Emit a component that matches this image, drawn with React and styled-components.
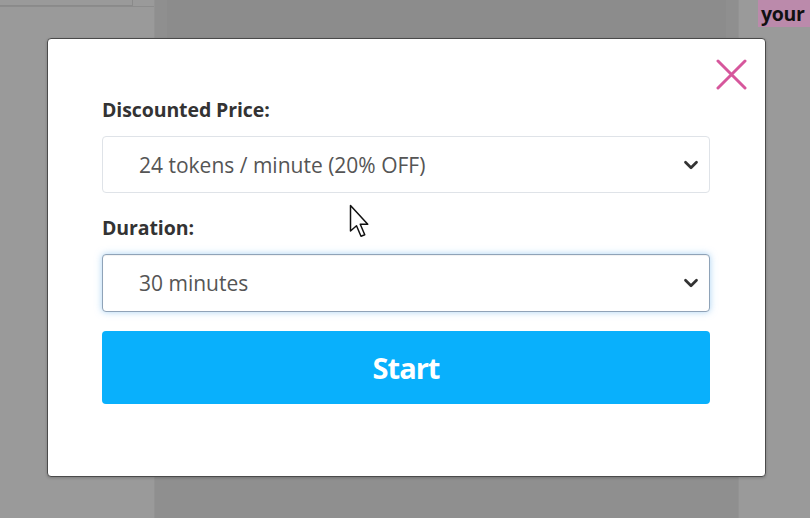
import React from "react";
import styled, { createGlobalStyle } from "styled-components";
import { ChevronDown } from "lucide-react";

const GlobalStyle = createGlobalStyle`
  html, body {
    margin: 0;
    padding: 0;
    background: #8f8f8f;
    font-family: "Open Sans", "Liberation Sans", sans-serif;
  }
  #root {
    width: 810px;
    height: 518px;
    overflow: hidden;
  }
`;

const Page = styled.div`
  position: relative;
  display: grid;
  grid-template-columns: 155px 1fr 72px;
  width: 810px;
  height: 518px;
  background: #8f8f8f;
`;

const SideColumn = styled.div`
  display: flex;
  flex-direction: column;
  background: #9a9a9a;
  border-${(p) => (p.right ? "left" : "right")}: 1px solid #939393;
`;

const TopStub = styled.div`
  width: 132px;
  height: 5px;
  border-bottom: 1px solid #8a8a8a;
  border-right: 1px solid #8a8a8a;
`;

const Filler = styled.div`
  flex: ${(p) => p.grow || 0};
  height: ${(p) => (p.h ? `${p.h}px` : "auto")};
  border-bottom: ${(p) => (p.line ? "1px solid #8c8c8c" : "none")};
`;

const MiddleColumn = styled.div`
  display: flex;
  flex-direction: column;
  padding: 0 12px;
`;

const MiddleBand = styled.div`
  height: 52px;
  background: #8c8c8c;
  border-bottom: 1px solid #939393;
`;

const Highlight = styled.div`
  margin-left: 19px;
  height: 27px;
  background: #bb8aab;
  display: flex;
  align-items: center;
  padding-left: 3px;
  font-family: "Open Sans", sans-serif;
  font-weight: 700;
  font-size: 19.5px;
  letter-spacing: -0.3px;
  color: #111;
`;

const Modal = styled.div`
  position: absolute;
  left: 47px;
  top: 38px;
  width: 719px;
  box-sizing: border-box;
  background: #fff;
  border: 1px solid #4a4a4a;
  border-radius: 4px;
  box-shadow: 0 1px 3px rgba(0, 0, 0, 0.2);
  padding: 61px 55px 72px 54px;
  display: flex;
  flex-direction: column;
`;

const CloseButton = styled.button`
  position: absolute;
  top: 20px;
  right: 18px;
  width: 31px;
  height: 31px;
  padding: 0;
  border: none;
  background: none;
  cursor: pointer;
`;

const Label = styled.label`
  display: block;
  font-size: 19.5px;
  line-height: 20px;
  font-weight: 700;
  letter-spacing: -0.1px;
  color: #333;
  margin: ${(p) => (p.first ? "0" : "25px")} 0 16px;
`;

const SelectWrap = styled.div`
  position: relative;
`;

const Select = styled.select`
  appearance: none;
  -webkit-appearance: none;
  width: 100%;
  height: ${(p) => p.h}px;
  box-sizing: border-box;
  padding: 0 40px 0 36px;
  border-radius: 4px;
  background: #fff;
  font-family: "Open Sans", sans-serif;
  font-size: 21px;
  color: #555;
  outline: none;
  border: 1px solid ${(p) => (p.focused ? "#8fa3b8" : "#dfe3e8")};
  box-shadow: ${(p) =>
    p.focused
      ? "0 0 7px rgba(102, 175, 233, 0.55), inset 0 1px 1px rgba(0,0,0,0.06)"
      : "none"};
`;

const Chevron = styled(ChevronDown)`
  position: absolute;
  right: 8px;
  top: 50%;
  transform: translateY(-50%);
  color: #333;
  pointer-events: none;
`;

const StartButton = styled.button`
  margin-top: 19px;
  height: 73px;
  border: none;
  border-radius: 4px;
  background: #09b0fc;
  color: #fff;
  font-family: "Open Sans", sans-serif;
  font-weight: 700;
  font-size: 29px;
  letter-spacing: -1px;
  cursor: pointer;
`;

const Cursor = styled.svg`
  position: absolute;
  left: 349px;
  top: 204px;
  pointer-events: none;
`;

export default function App() {
  return (
    <>
      <GlobalStyle />
      <Page>
        <SideColumn>
          <TopStub />
          <Filler h={437} line />
          <Filler grow={1} />
        </SideColumn>
        <MiddleColumn>
          <MiddleBand />
        </MiddleColumn>
        <SideColumn right>
          <Highlight>your</Highlight>
          <Filler grow={1} />
        </SideColumn>

        <Modal>
          <CloseButton aria-label="Close">
            <svg width="31" height="31" viewBox="0 0 31 31">
              <path
                d="M2 2 L29 29 M29 2 L2 29"
                stroke="#d6579c"
                strokeWidth="3"
                strokeLinecap="round"
              />
            </svg>
          </CloseButton>

          <Label first>Discounted Price:</Label>
          <SelectWrap>
            <Select h={57} defaultValue="24">
              <option value="24">24 tokens / minute (20% OFF)</option>
            </Select>
            <Chevron size={22} strokeWidth={3} />
          </SelectWrap>

          <Label>Duration:</Label>
          <SelectWrap>
            <Select h={58} focused defaultValue="30">
              <option value="30">30 minutes</option>
            </Select>
            <Chevron size={22} strokeWidth={3} />
          </SelectWrap>

          <StartButton>Start</StartButton>
        </Modal>

        <Cursor width="24" height="36" viewBox="0 0 16 24">
          <path
            d="M1 1 L1 18 L5 14.5 L8 21.5 L10.5 20.5 L7.5 13.5 L12.5 13.5 Z"
            fill="#fff"
            stroke="#111"
            strokeWidth="1"
            strokeLinejoin="round"
          />
        </Cursor>
      </Page>
    </>
  );
}
